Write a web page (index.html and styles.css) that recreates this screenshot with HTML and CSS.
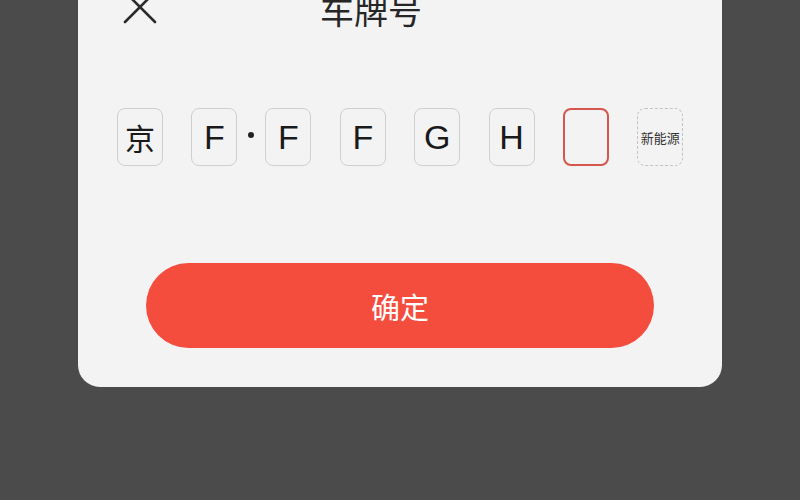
FILE: index.html
```html
<!DOCTYPE html>
<html>
<head>
<meta charset="utf-8">
<link rel="stylesheet" href="styles.css">
</head>
<body>
<div class="sheet">
  <div class="header">
    <svg class="close" width="36" height="36" viewBox="0 0 36 36">
      <path d="M3 3 L33 33 M33 3 L3 33" stroke="#2b2b2b" stroke-width="2.6" stroke-linecap="round" fill="none"/>
    </svg>
    <div class="title">车牌号</div>
  </div>
  <div class="plate">
    <div class="cell">京</div>
    <div class="cell latin">F</div>
    <div class="dot"></div>
    <div class="cell latin">F</div>
    <div class="cell latin">F</div>
    <div class="cell latin">G</div>
    <div class="cell latin">H</div>
    <div class="cell active"></div>
    <div class="cell ev">新能源</div>
  </div>
  <button class="confirm">确定</button>
</div>
</body>
</html>
```
FILE: styles.css
```css
html, body {
  margin: 0;
  padding: 0;
}
body {
  width: 800px;
  height: 500px;
  background: #4b4b4b;
  font-family: "Noto Sans CJK SC", "Liberation Sans", sans-serif;
  overflow: hidden;
}
.sheet {
  margin-left: 78px;
  width: 644px;
  height: 387px;
  background: #f3f3f3;
  border-radius: 0 0 22px 22px;
  box-sizing: border-box;
  padding: 0 0 39px 0;
  display: flex;
  flex-direction: column;
}
.header {
  display: flex;
  align-items: center;
  height: 30px;
  margin-top: -8px;
  padding-left: 44px;
}
.close {
  display: block;
  width: 36px;
  height: 36px;
}
.title {
  margin-left: 162px;
  font-size: 34px;
  line-height: 38px;
  color: #262626;
  margin-top: 6px;
}
.plate {
  display: flex;
  align-items: center;
  gap: 28.4px;
  margin-top: 86px;
  padding-left: 39px;
}
.cell {
  width: 46px;
  height: 58px;
  box-sizing: border-box;
  border: 1.6px solid #cfcfcf;
  border-radius: 8px;
  display: flex;
  align-items: center;
  justify-content: center;
  font-size: 30px;
  color: #1a1a1a;
  line-height: 1;
}
.cell.latin {
  font-family: "Liberation Sans", sans-serif;
  font-size: 34px;
}
.cell.active {
  border: 2px solid #d5564c;
}
.cell.ev {
  border: 1.6px dashed #c4c4c4;
  font-size: 13px;
  color: #333;
}
.dot {
  width: 6px;
  height: 6px;
  border-radius: 50%;
  background: #222;
  margin: -4px -17.4px 0 -17.4px;
}
.confirm {
  margin-top: auto;
  margin-left: 68px;
  width: 508px;
  height: 85px;
  border: none;
  border-radius: 43px;
  background: #f44d3e;
  color: #fff;
  font-family: "Noto Sans CJK SC", sans-serif;
  font-size: 29px;
  padding: 0;
}
```
